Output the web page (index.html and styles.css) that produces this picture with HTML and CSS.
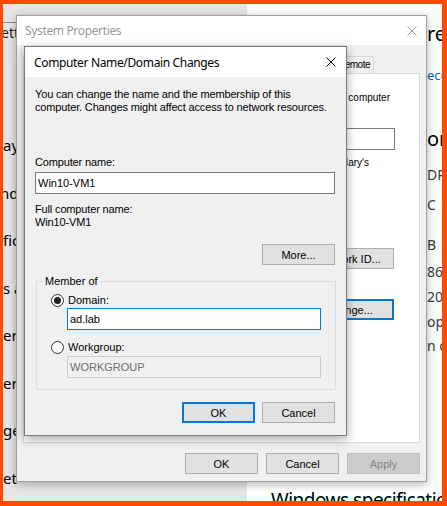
FILE: index.html
```html
<!DOCTYPE html>
<html lang="en">
<head>
<meta charset="utf-8">
<title>Computer Name/Domain Changes</title>
<link rel="stylesheet" href="styles.css">
</head>
<body>
<div class="screen">
  <div class="settings">
    <nav class="nav">
      <div class="nav-search">etting</div>
      <ul class="nav-list">
        <li>ay</li>
        <li class="shift">nd</li>
        <li>fic</li>
        <li>s a</li>
        <li>er</li>
        <li>ery</li>
        <li>ge</li>
        <li>et</li>
      </ul>
    </nav>
    <main class="about">
      <div class="frag h-a">re</div>
      <div class="frag link">ecu</div>
      <div class="frag h-b">on</div>
      <div class="frag spec s1">DP</div>
      <div class="frag spec s2">C</div>
      <div class="frag spec s3">B</div>
      <div class="frag spec s4">86</div>
      <div class="frag spec s5">20</div>
      <div class="frag spec s6">op</div>
      <div class="frag spec s7">n o</div>
      <div class="h-win">Windows specifications</div>
    </main>
  </div>

  <section class="win sysprops">
    <header class="titlebar">
      <span class="title">System Properties</span>
      <svg class="close" width="10" height="10" viewBox="0 0 10 10"><path d="M0.5 0.5L9.5 9.5M9.5 0.5L0.5 9.5" stroke="currentColor" stroke-width="1"/></svg>
    </header>
    <div class="sp-body">
      <div class="tabs">
        <span class="tab hidden-tab">Computer Name</span>
        <span class="tab hidden-tab">Hardware</span>
        <span class="tab hidden-tab">Advanced</span>
        <span class="tab hidden-tab">System Protection</span>
        <span class="tab tab-remote">Remote</span>
      </div>
      <div class="panel">
        <p class="pline l1">Windows uses the following information to identify your computer</p>
        <div class="tbox desc"></div>
        <p class="pline l2">For example: "Kitchen Computer" or "Mary's</p>
        <button class="btn wide b-net">Network ID...</button>
        <button class="btn wide default b-chg">Change...</button>
      </div>
      <div class="btnrow sp-btns">
        <button class="btn">OK</button>
        <button class="btn">Cancel</button>
        <button class="btn" disabled>Apply</button>
      </div>
    </div>
  </section>

  <section class="win dlg">
    <header class="titlebar">
      <span class="title">Computer Name/Domain Changes</span>
      <svg class="close" width="10" height="10" viewBox="0 0 10 10"><path d="M0.5 0.5L9.5 9.5M9.5 0.5L0.5 9.5" stroke="currentColor" stroke-width="1"/></svg>
    </header>
    <div class="dlg-body">
      <p class="txt intro">You can change the name and the membership of this<br>computer. Changes might affect access to network resources.</p>
      <label class="txt lbl-name">Computer name:</label>
      <div class="tbox name">Win10-VM1</div>
      <div class="txt lbl-full">Full computer name:</div>
      <div class="txt">Win10-VM1</div>
      <button class="btn b-more">More...</button>
      <fieldset class="group">
        <legend>Member of</legend>
        <div class="radio-row"><span class="radio on"></span><span>Domain:</span></div>
        <div class="tbox focus member">ad.lab</div>
        <div class="radio-row wg"><span class="radio"></span><span>Workgroup:</span></div>
        <div class="tbox disabled member wgbox">WORKGROUP</div>
      </fieldset>
      <div class="btnrow dlg-btns">
        <button class="btn default">OK</button>
        <button class="btn">Cancel</button>
      </div>
    </div>
  </section>
</div>
</body>
</html>
```

FILE: styles.css
```css
* { box-sizing: border-box; }
html, body { margin: 0; padding: 0; }
body {
  width: 447px; height: 506px; overflow: hidden;
  font-family: "Liberation Sans", Arial, sans-serif;
  font-size: 11px; color: #000;
}
.screen {
  position: relative; width: 447px; height: 506px;
  border: solid #ff4a00; border-width: 4px 5px 5px 3px;
  overflow: hidden;
}

/* background Settings window */
.settings { display: flex; height: 100%; font-family: "Noto Sans", "Open Sans", sans-serif; color: #000; white-space: nowrap; }
.nav { flex: none; width: 244px; background: #e6e6e6; overflow: hidden; }
.nav-search {
  margin-top: 18px; height: 32px; border-top: 1px solid #8c8c8c;
  font-size: 14px; line-height: 20px; padding-top: 0; margin-left: -2px; color: #222;
}
.nav-list { list-style: none; margin: 68px 0 0; padding: 0; font-size: 15px; }
.nav-list li { height: 47.5px; line-height: 47.5px; }
.nav-list li.shift { text-indent: -3px; }
.about { flex: 1; background: #fff; overflow: hidden; padding-left: 24px; }
.frag { margin-left: 156px; }
.h-a { margin-top: 16px; font-size: 20px; line-height: 28px; }
.link { margin-top: 17px; font-size: 13px; line-height: 20px; color: #0067b8; }
.h-b { margin-top: 40px; font-size: 20px; line-height: 28px; }
.spec { font-size: 14px; line-height: 20px; color: #3a3a3a; }
.s1 { margin-top: 12px; }
.s2 { margin-top: 10px; }
.s3 { margin-top: 20px; }
.s4 { margin-top: 7px; }
.s5 { margin-top: 5px; }
.s6 { margin-top: 5px; }
.s7 { margin-top: 4px; }
.h-win { margin-top: 130px; font-size: 19px; line-height: 28px; letter-spacing: -0.5px; }

/* windows */
.win { position: absolute; display: flex; flex-direction: column; background: #f0f0f0; }
.titlebar {
  flex: none; display: flex; align-items: center; justify-content: space-between;
  background: #fff; font-family: "Noto Sans", "Open Sans", sans-serif; font-size: 12px;
  letter-spacing: -0.35px;
}
.close { display: block; }

.sysprops {
  left: 13px; top: 11px; width: 411px; height: 467px;
  border: 1px solid #a0a0a0; box-shadow: 0 2px 9px rgba(0,0,0,.3);
}
.sysprops .titlebar { height: 29px; padding: 0 9px 0 8px; color: #999; }
.sp-body { flex: 1; padding: 11px 6px 0; display: flex; flex-direction: column; }
.tabs { display: flex; height: 17px; font-size: 10px; }
.tab {
  border: 1px solid #d9d9d9; border-bottom: none; padding: 0 3px;
  line-height: 15px; background: #f0f0f0; margin-right: -1px; white-space: nowrap;
}
.hidden-tab { flex: 0 1 auto; min-width: 0; overflow: hidden; }
.tab-remote { flex: none; margin-left: auto; margin-right: 46px; letter-spacing: -0.5px; }
.panel {
  height: 370px; flex: none; background: #fff; border: 1px solid #d9d9d9;
  display: flex; flex-direction: column; align-items: flex-end;
  padding: 17px 24px 0 12px;
}
.pline { margin: 0; line-height: 13px; white-space: nowrap; font-size: 10px; }
.l1 { margin-right: 5px; }
.desc { margin-top: 24px; width: 250px; height: 21px; }
.l2 { margin-top: 6px; margin-right: 26px; }
.btn.wide { width: 90px; }
.b-net { margin-top: 79px; margin-right: 1px; }
.b-chg { margin-top: 30px; margin-right: 1px; }
.sp-btns { margin-top: 10px; gap: 8px; }

.dlg {
  left: 21px; top: 42px; width: 323px; height: 390px;
  border: 1px solid #7a7a7a; box-shadow: 0 3px 10px rgba(0,0,0,.35);
}
.dlg .titlebar { height: 30px; padding: 0 10px 0 9px; color: #000; }
.dlg-body { flex: 1; padding: 11px 11px 0 10px; display: flex; flex-direction: column; }
.txt { display: block; margin: 0; line-height: 13px; letter-spacing: -0.15px; }
.lbl-name { margin-top: 42px; }
.name { margin-top: 3px; }
.lbl-full { margin-top: 9px; }
.b-more { margin-top: 15px; align-self: flex-end; }

.group {
  margin: 10px -1px 0 1px; padding: 6px 14px 11px; min-width: 0;
  border: 1px solid #dcdcdc;
}
.group legend { padding: 0 2px; margin-left: -8px; line-height: 13px; }
.radio-row { display: flex; align-items: center; gap: 4px; height: 13px; line-height: 13px; }
.radio {
  flex: none; width: 13px; height: 13px; border: 1px solid #333; border-radius: 50%;
  background: #fff; display: flex; align-items: center; justify-content: center;
}
.radio.on::after { content: ""; width: 7px; height: 7px; border-radius: 50%; background: #222; }
.member { margin-top: 1px; margin-left: 16px; height: 23px; line-height: 21px; }
.wg { margin-top: 11px; }
.wgbox { margin-top: 2px; height: 22px; line-height: 20px; }
.dlg-btns { margin-top: 12px; gap: 7px; }

/* controls */
.tbox {
  height: 22px; background: #fff; border: 1px solid #7a7a7a;
  padding: 0 2px; line-height: 20px; white-space: nowrap; overflow: hidden;
}
.tbox.focus { border-color: #0078d7; }
.tbox.disabled { background: #f0f0f0; border-color: #cccccc; color: #6d6d6d; }
.btnrow { display: flex; justify-content: flex-end; }
.btn {
  font: inherit; font-size: 11px; width: 73px; height: 21px; padding: 0;
  background: #e1e1e1; border: 1px solid #adadad; color: #000; flex: none;
}
.btn.default { border: 2px solid #0078d7; }
.btn:disabled { background: #cccccc; border-color: #bfbfbf; color: #838383; }
```
